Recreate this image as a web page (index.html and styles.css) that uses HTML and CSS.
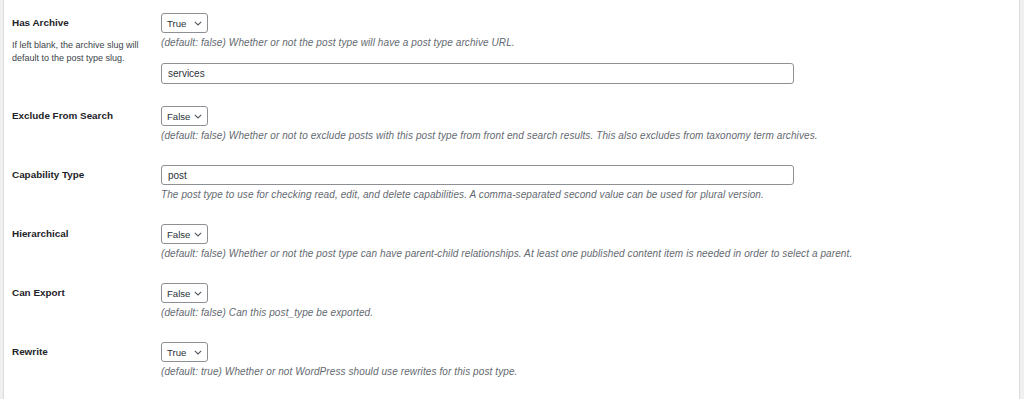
FILE: index.html
```html
<!DOCTYPE html>
<html lang="en">
<head>
<meta charset="utf-8">
<title>Post Type Settings</title>
<link rel="stylesheet" href="styles.css">
</head>
<body>
<div class="panel">
  <div class="row row-first">
    <div class="label">
      <div class="label-title">Has Archive</div>
      <p class="label-help">If left blank, the archive slug will default to the post type slug.</p>
    </div>
    <div class="field">
      <div class="select"><span>True</span><svg class="chev" viewBox="0 0 8 5" width="8" height="5"><path d="M0.8 0.8l3.2 3.2 3.2-3.2" fill="none" stroke="#50575e" stroke-width="1.1"/></svg></div>
      <p class="desc">(default: false) Whether or not the post type will have a post type archive URL.</p>
      <input class="text-input input-archive" type="text" value="services">
    </div>
  </div>

  <div class="row">
    <div class="label"><div class="label-title">Exclude From Search</div></div>
    <div class="field">
      <div class="select"><span>False</span><svg class="chev" viewBox="0 0 8 5" width="8" height="5"><path d="M0.8 0.8l3.2 3.2 3.2-3.2" fill="none" stroke="#50575e" stroke-width="1.1"/></svg></div>
      <p class="desc">(default: false) Whether or not to exclude posts with this post type from front end search results. This also excludes from taxonomy term archives.</p>
    </div>
  </div>

  <div class="row">
    <div class="label"><div class="label-title">Capability Type</div></div>
    <div class="field">
      <input class="text-input" type="text" value="post">
      <p class="desc">The post type to use for checking read, edit, and delete capabilities. A comma-separated second value can be used for plural version.</p>
    </div>
  </div>

  <div class="row">
    <div class="label"><div class="label-title">Hierarchical</div></div>
    <div class="field">
      <div class="select"><span>False</span><svg class="chev" viewBox="0 0 8 5" width="8" height="5"><path d="M0.8 0.8l3.2 3.2 3.2-3.2" fill="none" stroke="#50575e" stroke-width="1.1"/></svg></div>
      <p class="desc">(default: false) Whether or not the post type can have parent-child relationships. At least one published content item is needed in order to select a parent.</p>
    </div>
  </div>

  <div class="row">
    <div class="label"><div class="label-title">Can Export</div></div>
    <div class="field">
      <div class="select"><span>False</span><svg class="chev" viewBox="0 0 8 5" width="8" height="5"><path d="M0.8 0.8l3.2 3.2 3.2-3.2" fill="none" stroke="#50575e" stroke-width="1.1"/></svg></div>
      <p class="desc">(default: false) Can this post_type be exported.</p>
    </div>
  </div>

  <div class="row">
    <div class="label"><div class="label-title">Rewrite</div></div>
    <div class="field">
      <div class="select"><span>True</span><svg class="chev" viewBox="0 0 8 5" width="8" height="5"><path d="M0.8 0.8l3.2 3.2 3.2-3.2" fill="none" stroke="#50575e" stroke-width="1.1"/></svg></div>
      <p class="desc">(default: true) Whether or not WordPress should use rewrites for this post type.</p>
    </div>
  </div>
</div>
</body>
</html>
```

FILE: styles.css
```css
html, body {
  margin: 0;
  padding: 0;
  background: #f0f0f1;
  font-family: "Liberation Sans", Arial, sans-serif;
  color: #1d2327;
}

.panel {
  margin: 0 4px 0 3px;
  min-height: 100vh;
  background: #fff;
  border-left: 1px solid #dcdcde;
  border-right: 1px solid #dcdcde;
  box-sizing: border-box;
  padding-left: 8px;
}

.row {
  display: flex;
  padding: 12px 0 11px;
}

.row-first {
  padding-top: 13px;
  padding-bottom: 10px;
}

.label {
  width: 148px;
  flex: none;
}

.label-title {
  font-weight: bold;
  font-size: 9.9px;
  line-height: 20px;
}

.label-help {
  margin: 6px 0 0;
  font-size: 9px;
  line-height: 13px;
  color: #3c434a;
  padding-right: 6px;
}

.field {
  flex: 1;
  padding-left: 1px;
}

.select {
  box-sizing: border-box;
  width: 47px;
  height: 20px;
  border: 1px solid #8c8f94;
  border-radius: 3px;
  display: flex;
  align-items: center;
  justify-content: space-between;
  padding: 0 5px 0 5px;
  font-size: 9.6px;
  color: #2c3338;
  background: #fff;
}

.chev {
  display: block;
  margin-top: 1px;
}

.desc {
  margin: 4px 0 0;
  font-size: 10px;
  letter-spacing: 0.1px;
  line-height: 12px;
  font-style: italic;
  color: #646970;
}

.text-input {
  display: block;
  box-sizing: border-box;
  width: 633px;
  height: 20px;
  margin: 0;
  border: 1px solid #8c8f94;
  border-radius: 3px;
  padding: 0 6px;
  font-family: "Liberation Sans", Arial, sans-serif;
  font-size: 10px;
  color: #2c3338;
  background: #fff;
  outline: none;
}

.input-archive {
  margin-top: 14px;
  height: 21px;
}
```
